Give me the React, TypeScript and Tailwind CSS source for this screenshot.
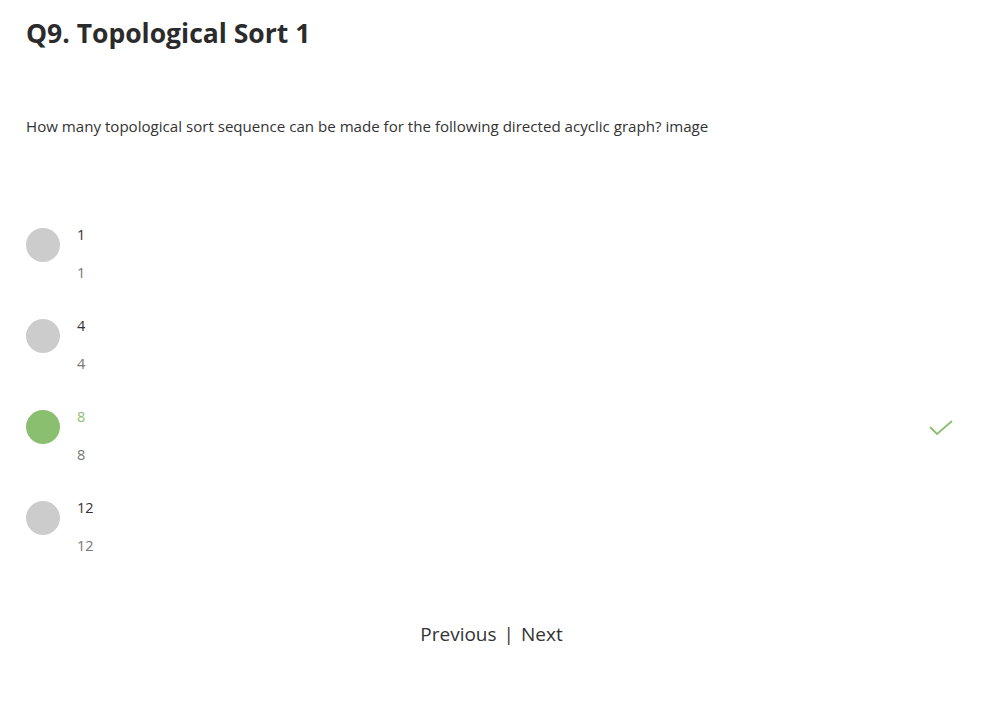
import React from "react";

const options = [
  { label: "1", correct: false },
  { label: "4", correct: false },
  { label: "8", correct: true },
  { label: "12", correct: false },
];

export default function App() {
  return (
    <div
      className="min-h-[727px] bg-white px-[26px] text-[#333]"
      style={{ fontFamily: "'Open Sans', 'Liberation Sans', sans-serif" }}
    >
      <h1 className="pt-[14px] text-[26.5px] font-bold leading-[38px] text-[#2b2b2b]">
        Q9. Topological Sort 1
      </h1>
      <p className="mt-[63px] text-[15.1px] leading-[22px] text-[#333]">
        How many topological sort sequence can be made for the following directed acyclic graph? image
      </p>
      <div className="mt-[87px] flex flex-col gap-[31px]">
        {options.map((o) => (
          <div key={o.label} className="flex items-start">
            <div
              className={`mt-[4px] h-[34px] w-[34px] shrink-0 rounded-full ${
                o.correct ? "bg-[#8abf70]" : "bg-[#cccccc]"
              }`}
            />
            <div className="ml-[17px] flex flex-1 flex-col gap-[16px] text-[14.5px] leading-[22px]">
              <span className={o.correct ? "text-[#8abf70]" : "text-[#333]"}>{o.label}</span>
              <span className="text-[#777]">{o.label}</span>
            </div>
            {o.correct && (
              <div className="mt-[5px] mr-[4px] flex h-[34px] items-center">
                <svg width="24" height="18" viewBox="0 0 24 18">
                  <path d="M1 8 L8 15 L23 2" fill="none" stroke="#8abf70" strokeWidth="1.8" />
                </svg>
              </div>
            )}
          </div>
        ))}
      </div>
      <div className="mt-[63px] flex justify-center text-[19px] leading-[28px] text-[#333]">
        <span>Previous</span>
        <span className="mx-[7px]">|</span>
        <span>Next</span>
      </div>
    </div>
  );
}
